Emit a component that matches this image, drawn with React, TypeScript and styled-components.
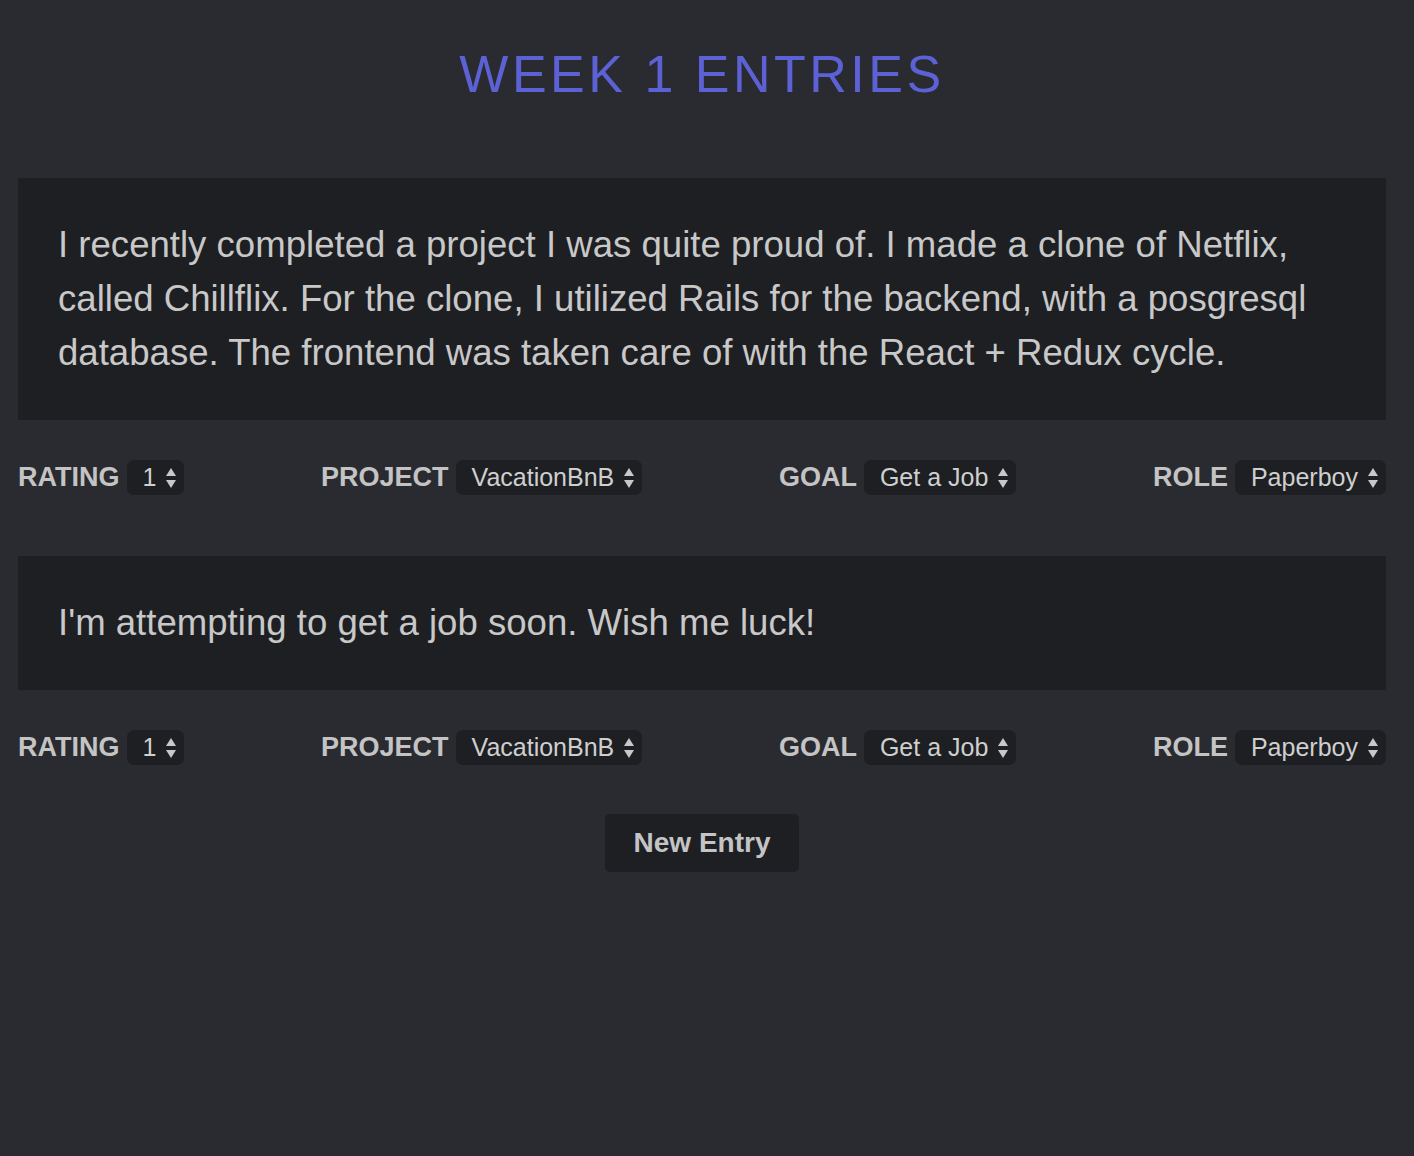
import React from "react";
import styled, { createGlobalStyle } from "styled-components";

const GlobalStyle = createGlobalStyle`
  html, body {
    margin: 0;
    padding: 0;
    background: #2a2b30;
    min-height: 100%;
  }
  body {
    font-family: "Liberation Sans", Arial, Helvetica, sans-serif;
    color: #c6c6c6;
  }
`;

const Page = styled.div`
  min-height: 1156px;
  box-sizing: border-box;
  padding: 48px 28px 0 18px;
  background: #2a2b30;
`;

const Title = styled.h1`
  margin: 0 0 78px;
  font-size: 52px;
  line-height: 1;
  font-weight: 400;
  letter-spacing: 3.5px;
  text-align: center;
  color: #5c62d6;
`;

const Entry = styled.section`
  display: flex;
  flex-direction: column;
  margin-bottom: 61px;
`;

const Body = styled.div`
  background: #1e1f23;
  padding: 40px 40px;
  font-size: 36.6px;
  line-height: 54px;
  color: #c8c8c8;
`;

const Controls = styled.div`
  display: flex;
  justify-content: space-between;
  align-items: center;
  margin-top: 40px;
`;

const Field = styled.label`
  display: flex;
  align-items: center;
  gap: 7px;
`;

const Label = styled.span`
  font-size: 27px;
  font-weight: 700;
  color: #c4c4c4;
`;

const Select = styled.div`
  display: flex;
  align-items: center;
  gap: 9px;
  height: 35px;
  box-sizing: border-box;
  padding: 0 7px 0 16px;
  background: #1e1f23;
  border-radius: 7px;
  font-size: 25px;
  color: #cfcfcf;
`;

const Button = styled.button`
  display: block;
  margin: -12px auto 0;
  height: 58px;
  padding: 0 29px;
  background: #1e1f23;
  border: none;
  border-radius: 5px;
  font-family: "Liberation Sans", Arial, sans-serif;
  font-size: 28px;
  font-weight: 700;
  color: #c4c4c4;
`;

const Arrows = () => (
  <svg width="12" height="22" viewBox="0 0 12 22" aria-hidden>
    <polygon points="6,1 11,9 1,9" fill="#c8c8c8" />
    <polygon points="1,13 11,13 6,21" fill="#c8c8c8" />
  </svg>
);

const Dropdown = ({ value }: { value: string }) => (
  <Select>
    <span>{value}</span>
    <Arrows />
  </Select>
);

const entries = [
  "I recently completed a project I was quite proud of. I made a clone of Netflix, called Chillflix. For the clone, I utilized Rails for the backend, with a posgresql database. The frontend was taken care of with the React + Redux cycle.",
  "I'm attempting to get a job soon. Wish me luck!",
];

export default function App() {
  return (
    <>
      <GlobalStyle />
      <Page>
        <Title>WEEK 1 ENTRIES</Title>
        {entries.map((text, i) => (
          <Entry key={i}>
            <Body>{text}</Body>
            <Controls>
              <Field>
                <Label>RATING</Label>
                <Dropdown value="1" />
              </Field>
              <Field>
                <Label>PROJECT</Label>
                <Dropdown value="VacationBnB" />
              </Field>
              <Field>
                <Label>GOAL</Label>
                <Dropdown value="Get a Job" />
              </Field>
              <Field>
                <Label>ROLE</Label>
                <Dropdown value="Paperboy" />
              </Field>
            </Controls>
          </Entry>
        ))}
        <Button>New Entry</Button>
      </Page>
    </>
  );
}
